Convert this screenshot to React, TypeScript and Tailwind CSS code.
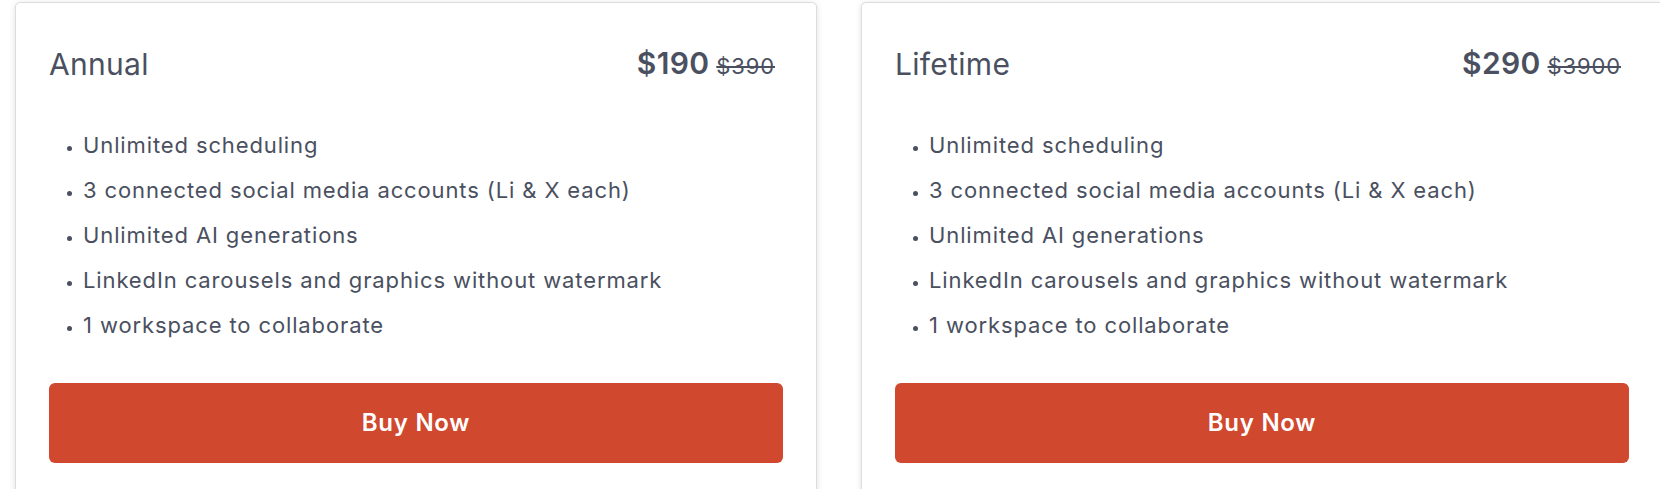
const plans = [
  { name: "Annual", price: "$190", was: "$390" },
  { name: "Lifetime", price: "$290", was: "$3900" },
];

const features = [
  "Unlimited scheduling",
  "3 connected social media accounts (Li & X each)",
  "Unlimited AI generations",
  "LinkedIn carousels and graphics without watermark",
  "1 workspace to collaborate",
];

function PlanCard({ name, price, was }: { name: string; price: string; was: string }) {
  return (
    <div className="flex w-[802px] shrink-0 flex-col rounded-[5px] border border-[#dcdcdc] bg-white px-[33px] pt-[38px] pb-[40px] shadow-[0_1px_6px_rgba(0,0,0,0.12)]">
      <div className="flex items-center justify-between pr-[8px]">
        <h2 className="text-[30px] leading-[44px] font-normal tracking-[0.01em] text-[#4a5060]">{name}</h2>
        <div className="flex items-baseline gap-[7px] text-[#4a5060]">
          <span className="text-[30px] font-semibold tracking-[0.01em]">{price}</span>
          <span className="text-[22px] tracking-[0.04em] line-through">{was}</span>
        </div>
      </div>

      <ul className="mt-[37px] list-disc pl-[34px] text-[22px] leading-[45px] tracking-[0.04em] text-[#4a5060] marker:text-[14px]">
        {features.map((f) => (
          <li key={f}>{f}</li>
        ))}
      </ul>

      <button className="mt-[35px] h-[80px] w-full rounded-[6px] bg-[#d0482d] text-[24px] font-semibold tracking-[0.03em] text-white">
        Buy Now
      </button>
    </div>
  );
}

export default function App() {
  return (
    <div className="h-[489px] w-[1660px] overflow-hidden bg-white font-['Inter',sans-serif]">
      <div className="flex gap-[44px] pt-[2px] pl-[15px]">
        {plans.map((p) => (
          <PlanCard key={p.name} {...p} />
        ))}
      </div>
    </div>
  );
}
